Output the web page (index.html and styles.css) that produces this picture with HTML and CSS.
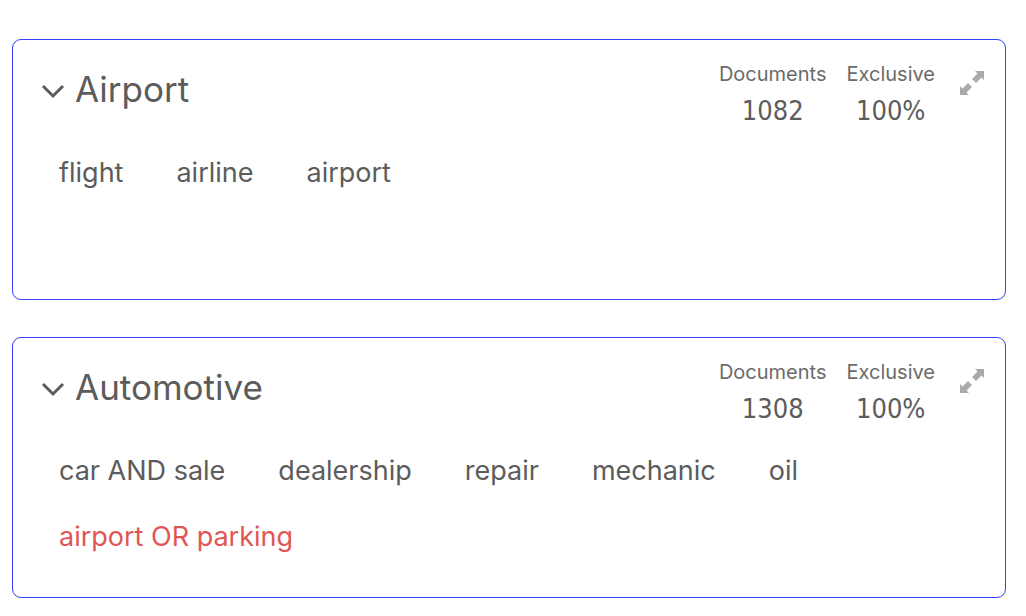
FILE: index.html
```html
<!DOCTYPE html>
<html lang="en">
<head>
<meta charset="utf-8">
<title>Topics</title>
<link rel="stylesheet" href="styles.css">
</head>
<body>
<main class="topics">
  <section class="card">
    <header class="card-header">
      <button class="toggle" type="button" aria-expanded="true" aria-label="Collapse Airport">
        <svg class="chevron" viewBox="0 0 24 16" aria-hidden="true"><path d="M2 3 L12 13 L22 3"/></svg>
      </button>
      <h2 class="title">Airport</h2>
      <dl class="stats">
        <div class="stat"><dt class="stat-label">Documents</dt><dd class="stat-value">1082</dd></div>
        <div class="stat"><dt class="stat-label">Exclusive</dt><dd class="stat-value">100%</dd></div>
      </dl>
      <button class="expand" type="button" aria-label="Expand Airport">
        <svg class="expand-icon" viewBox="0 0 26 26" aria-hidden="true"><path d="M16 1H25V10L22.5 7.5L17 13L13 9L18.5 3.500ZM9 13L13 17L7.500 22.500L10 25H1V16L3.500 18.500Z"/></svg>
      </button>
    </header>
    <ul class="terms">
      <li>flight</li>
      <li>airline</li>
      <li>airport</li>
    </ul>
  </section>
  <section class="card">
    <header class="card-header">
      <button class="toggle" type="button" aria-expanded="true" aria-label="Collapse Automotive">
        <svg class="chevron" viewBox="0 0 24 16" aria-hidden="true"><path d="M2 3 L12 13 L22 3"/></svg>
      </button>
      <h2 class="title">Automotive</h2>
      <dl class="stats">
        <div class="stat"><dt class="stat-label">Documents</dt><dd class="stat-value">1308</dd></div>
        <div class="stat"><dt class="stat-label">Exclusive</dt><dd class="stat-value">100%</dd></div>
      </dl>
      <button class="expand" type="button" aria-label="Expand Automotive">
        <svg class="expand-icon" viewBox="0 0 26 26" aria-hidden="true"><path d="M16 1H25V10L22.5 7.5L17 13L13 9L18.5 3.500ZM9 13L13 17L7.500 22.500L10 25H1V16L3.500 18.500Z"/></svg>
      </button>
    </header>
    <ul class="terms">
      <li>car AND sale</li>
      <li>dealership</li>
      <li>repair</li>
      <li>mechanic</li>
      <li>oil</li>
      <li class="conflict">airport OR parking</li>
    </ul>
  </section>
</main>
</body>
</html>
```
FILE: styles.css
```css
* {
  box-sizing: border-box;
}

body {
  margin: 0;
  background: #fff;
  color: #5c5c5c;
  font-family: Inter, "Liberation Sans", sans-serif;
}

.topics {
  display: flex;
  flex-direction: column;
  gap: 37px;
  padding: 39px 20px 17px 12px;
}

.card {
  min-height: 261px;
  padding: 20px 20px 28px 28px;
  border: 1px solid #3040ff;
  border-radius: 9px;
}

.card-header {
  display: flex;
  align-items: flex-start;
}

.toggle,
.expand {
  padding: 0;
  border: 0;
  background: none;
  cursor: pointer;
}

.toggle {
  display: flex;
  align-items: center;
  height: 62px;
}

.chevron {
  width: 24px;
  height: 16px;
  fill: none;
  stroke: #5c5c5c;
  stroke-width: 3;
}

.title {
  flex: 1;
  margin: 0 0 0 10px;
  font-size: 35px;
  font-weight: 400;
  line-height: 58px;
}

.stats {
  display: flex;
  gap: 20px;
  margin: 0;
}

.stat {
  text-align: center;
}

.stat-label {
  color: #6b6b6b;
  font-size: 20px;
  line-height: 28px;
}

.stat-value {
  margin: 0;
  font-family: "DejaVu Sans Condensed", "DejaVu Sans", sans-serif;
  font-size: 27px;
  line-height: 45px;
}

.expand {
  display: flex;
  margin: 10px 0 0 24px;
}

.expand-icon {
  width: 26px;
  height: 26px;
  fill: #aaa;
}

.terms {
  display: flex;
  flex-wrap: wrap;
  gap: 30px 53px;
  margin: 22px 0 0;
  padding: 0 18px;
  list-style: none;
  font-size: 27px;
  line-height: 36px;
}

.conflict {
  color: #e05656;
}
```
